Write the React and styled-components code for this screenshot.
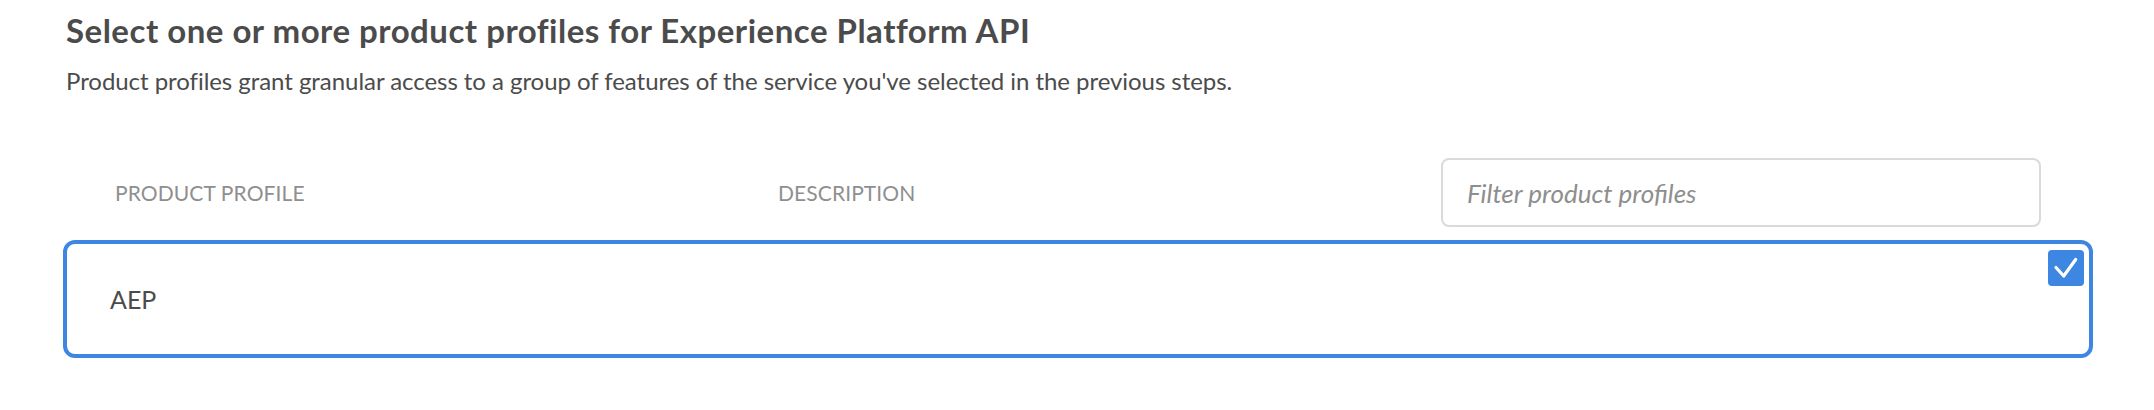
import React from 'react';
import styled, { createGlobalStyle } from 'styled-components';

const GlobalStyle = createGlobalStyle`
  html, body {
    margin: 0;
    padding: 0;
    background: #fff;
  }
  body {
    font-family: Lato, "Noto Sans", sans-serif;
  }
`;

const Page = styled.div`
  padding: 12px 61px 0 63px;
  width: 2154px;
  box-sizing: border-box;
`;

const Intro = styled.div`
  padding-left: 3px;
`;

const Title = styled.h2`
  margin: 0;
  font-size: 33px;
  line-height: 36px;
  font-weight: 700;
  letter-spacing: 0.5px;
  color: #4b4b4b;
`;

const Subtitle = styled.p`
  margin: 19px 0 0;
  font-size: 24px;
  line-height: 28px;
  letter-spacing: -0.05px;
  color: #4b4b4b;
`;

const HeaderRow = styled.div`
  display: flex;
  align-items: center;
  margin-top: 63px;
  padding: 0 52px;
  height: 69px;
`;

const ColumnLabel = styled.div`
  width: ${(p) => p.width || 'auto'};
  flex: ${(p) => (p.grow ? 1 : 'none')};
  font-size: 21px;
  color: #8f8f8f;
  text-transform: uppercase;
  letter-spacing: 0.1px;
`;

const FilterInput = styled.input`
  width: 600px;
  height: 69px;
  box-sizing: border-box;
  border: 2px solid #dadada;
  border-radius: 8px;
  padding: 0 24px;
  font-family: inherit;
  font-size: 26px;
  outline: none;
  &::placeholder {
    color: #8e8e8e;
    font-style: italic;
  }
`;

const ProfileCard = styled.div`
  margin-top: 13px;
  height: 118px;
  box-sizing: border-box;
  border: 4px solid #3d86e2;
  border-radius: 12px;
  display: flex;
  align-items: center;
  padding: 0 5px 0 43px;
`;

const ProfileName = styled.div`
  flex: 1;
  font-size: 25px;
  color: #4b4b4b;
`;

const Checkbox = styled.div`
  align-self: flex-start;
  margin-top: 6px;
  width: 36px;
  height: 36px;
  border-radius: 4px;
  background: #3d86e2;
  display: flex;
  align-items: center;
  justify-content: center;
`;

const CheckIcon = () => (
  <svg width="36" height="36" viewBox="0 0 36 36">
    <path
      d="M8 17.5 L15.7 26 L27.7 9.5"
      fill="none"
      stroke="#fff"
      strokeWidth="3.2"
      strokeLinecap="round"
      strokeLinejoin="round"
    />
  </svg>
);

export default function App() {
  return (
    <Page>
      <GlobalStyle />
      <Intro>
        <Title>Select one or more product profiles for Experience Platform API</Title>
        <Subtitle>
          Product profiles grant granular access to a group of features of the service you've selected in the previous steps.
        </Subtitle>
      </Intro>
      <HeaderRow>
        <ColumnLabel width="663px">Product Profile</ColumnLabel>
        <ColumnLabel grow>Description</ColumnLabel>
        <FilterInput placeholder="Filter product profiles" />
      </HeaderRow>
      <ProfileCard>
        <ProfileName>AEP</ProfileName>
        <Checkbox>
          <CheckIcon />
        </Checkbox>
      </ProfileCard>
    </Page>
  );
}
